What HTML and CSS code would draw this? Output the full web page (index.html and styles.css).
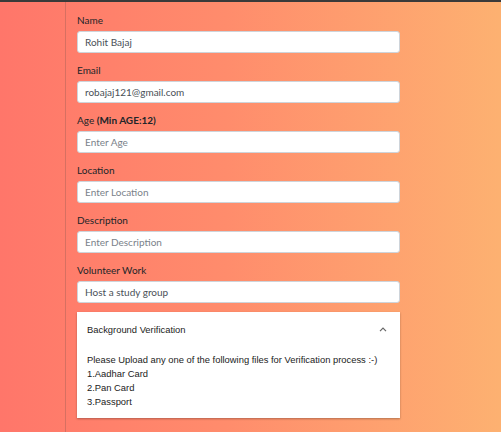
FILE: index.html
```html
<!DOCTYPE html>
<html>
<head>
<meta charset="utf-8">
<link rel="stylesheet" href="styles.css">
</head>
<body>
<div class="wrap">
  <form class="form">
    <div class="group">
      <label>Name</label>
      <input type="text" value="Rohit Bajaj">
    </div>
    <div class="group">
      <label>Email</label>
      <input type="text" value="robajaj121@gmail.com">
    </div>
    <div class="group">
      <label>Age <b>(Min AGE:12)</b></label>
      <input type="text" placeholder="Enter Age">
    </div>
    <div class="group">
      <label>Location</label>
      <input type="text" placeholder="Enter Location">
    </div>
    <div class="group">
      <label>Description</label>
      <input type="text" placeholder="Enter Description">
    </div>
    <div class="group">
      <label>Volunteer Work</label>
      <input type="text" value="Host a study group">
    </div>
    <div class="panel">
      <div class="panel-head">
        <span>Background Verification</span>
        <svg class="chev" width="8" height="5" viewBox="0 0 8 5"><path d="M1 4.2 L4 1.2 L7 4.2" fill="none" stroke="#666" stroke-width="1.2"/></svg>
      </div>
      <div class="panel-body">
        <div>Please Upload any one of the following files for Verification process :-)</div>
        <div>1.Aadhar Card</div>
        <div>2.Pan Card</div>
        <div>3.Passport</div>
      </div>
    </div>
  </form>
</div>
</body>
</html>
```

FILE: styles.css
```css
html, body {
  margin: 0;
  padding: 0;
  height: 100%;
}
body {
  background: linear-gradient(to right, #ff766a 0%, #ff8c6c 45%, #fdb171 100%);
  border-top: 2px solid #3a3a3a;
  box-sizing: border-box;
  overflow: hidden;
}
.wrap {
  margin-left: 65px;
  border-left: 1px solid rgba(140, 90, 80, 0.35);
  padding: 10px 0 0 11px;
  height: 100%;
  box-sizing: border-box;
}
.form {
  width: 323px;
}
.group {
  margin-bottom: 9px;
}
label {
  display: block;
  font-family: Lato, "Open Sans", sans-serif;
  font-size: 10px;
  line-height: 16px;
  color: #212529;
  margin-bottom: 3px;
}
label b {
  font-weight: 700;
}
input {
  display: block;
  width: 100%;
  height: 22px;
  box-sizing: border-box;
  border: 1px solid #ced4da;
  border-radius: 3px;
  padding: 0 7px;
  font-family: Lato, "Open Sans", sans-serif;
  font-size: 10px;
  color: #495057;
  background: #fff;
  outline: none;
}
input::placeholder {
  color: #7a828a;
}
.panel {
  margin-top: 1px;
  background: #fff;
  box-shadow: 0 1px 2px rgba(0, 0, 0, 0.3);
  font-family: "Liberation Sans", Arial, sans-serif;
  font-size: 9.4px;
  color: #222;
}
.panel-head {
  height: 34px;
  display: flex;
  align-items: center;
  justify-content: space-between;
  padding: 0 13px 0 10px;
}
.chev {
  display: block;
}
.panel-body {
  padding: 7px 10px 9px 10px;
  line-height: 14px;
}
```
